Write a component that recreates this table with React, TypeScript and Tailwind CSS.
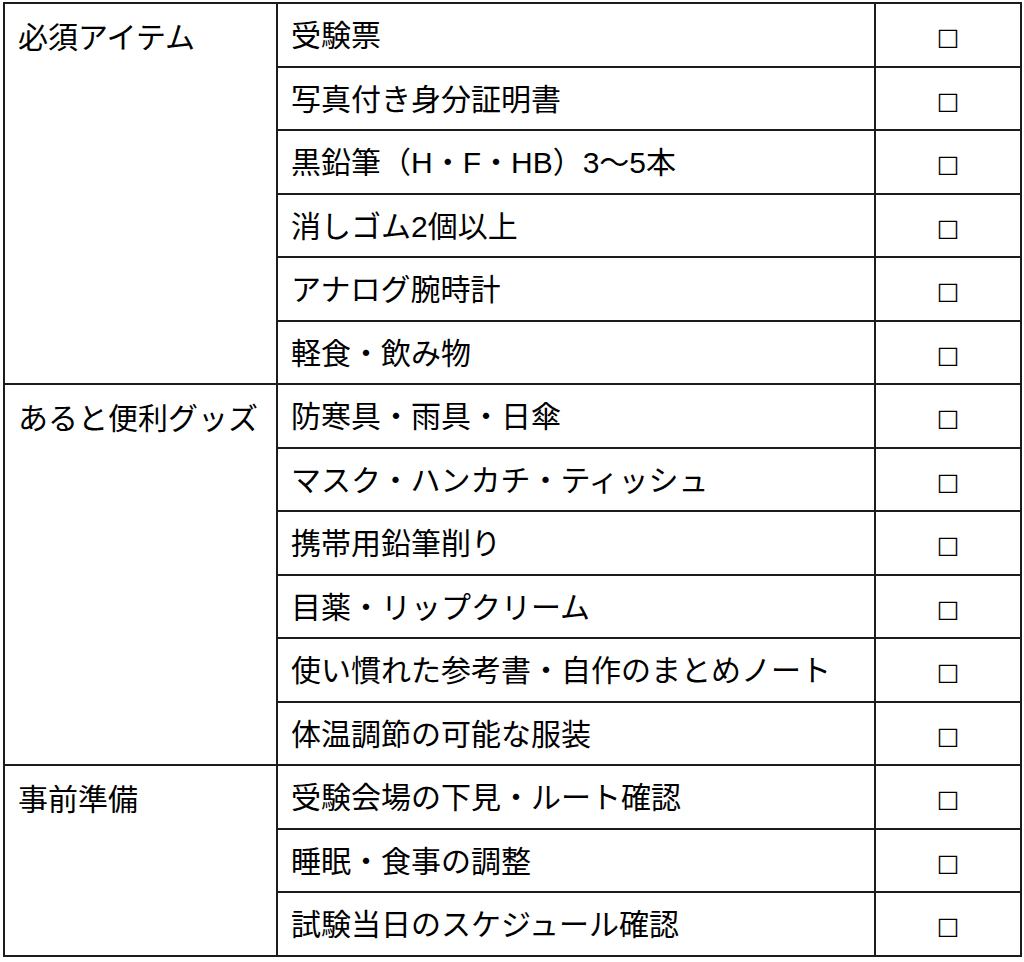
import React from 'react';

type Group = { label: string; items: string[] };

const GROUPS: Group[] = [
  {
    label: '必須アイテム',
    items: [
      '受験票',
      '写真付き身分証明書',
      '黒鉛筆（H・F・HB）3〜5本',
      '消しゴム2個以上',
      'アナログ腕時計',
      '軽食・飲み物',
    ],
  },
  {
    label: 'あると便利グッズ',
    items: [
      '防寒具・雨具・日傘',
      'マスク・ハンカチ・ティッシュ',
      '携帯用鉛筆削り',
      '目薬・リップクリーム',
      '使い慣れた参考書・自作のまとめノート',
      '体温調節の可能な服装',
    ],
  },
  {
    label: '事前準備',
    items: ['受験会場の下見・ルート確認', '睡眠・食事の調整', '試験当日のスケジュール確認'],
  },
];

const cell = 'border-2 border-[#1c1c1c] h-[63.5px] px-[13px] align-middle';

const App: React.FC = () => {
  return (
    <div className="bg-white w-[1024px] h-[962px] pt-[2px] pl-[3px] text-black font-['Liberation_Sans','Noto_Sans_CJK_JP',sans-serif] text-[30px] leading-[1.3]">
      <table className="border-collapse w-[1017px] table-fixed">
        <colgroup>
          <col className="w-[273px]" />
          <col className="w-[598px]" />
          <col className="w-[146px]" />
        </colgroup>
        <tbody>
          {GROUPS.map((group) =>
            group.items.map((item, i) => (
              <tr key={group.label + item}>
                {i === 0 && (
                  <td rowSpan={group.items.length} className={`${cell} !align-top pt-[14px] whitespace-nowrap`}>
                    {group.label}
                  </td>
                )}
                <td className={`${cell} whitespace-nowrap pt-[2px]`}>{item}</td>
                <td className={`${cell} text-center`}>
                  <span className="font-['DejaVu_Sans',sans-serif] text-[24px]">□</span>
                </td>
              </tr>
            ))
          )}
        </tbody>
      </table>
    </div>
  );
};

export default App;
